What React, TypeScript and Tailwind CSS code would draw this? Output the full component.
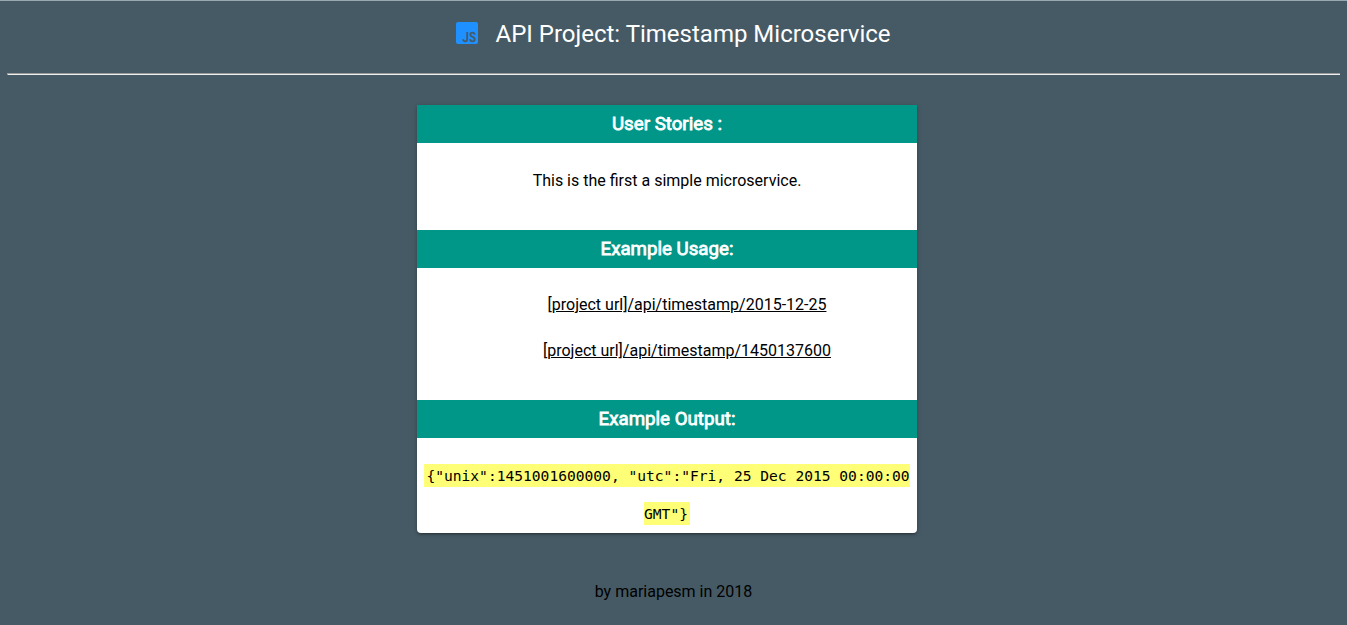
import React from "react";

function SectionTitle({ children }: { children: React.ReactNode }) {
  return (
    <h3 className="h-[38px] bg-[#009688] text-center text-[18.72px] font-normal leading-[38px] text-white [-webkit-text-stroke:0.8px_white]">
      {children}
    </h3>
  );
}

export default function App() {
  return (
    <div className="h-[625px] overflow-hidden border-t border-[#9aa8b0] bg-[#465a65] font-['Roboto',sans-serif] text-base text-black">
      <header className="flex h-[72px] items-start justify-center pt-[15px]">
        <svg className="mt-[6px] mr-[17px] h-[22px] w-[22px]" viewBox="0 0 22 22">
          <rect width="22" height="22" rx="2" fill="#1e90ff" />
          <path
            d="M11.2 10v7.2q0 2.1-2 2.1t-2.1-2M18.6 12.6q-.2-2-2.2-2-2.1 0-2.1 1.9 0 1.7 2.1 2.3 2.3.6 2.3 2.4 0 2.1-2.3 2.1t-2.5-2.1"
            fill="none"
            stroke="#465a65"
            strokeWidth="1.8"
          />
        </svg>
        <h1 className="text-2xl leading-9 text-white">API Project: Timestamp Microservice</h1>
      </header>
      <hr className="mx-[7px] h-[2px] border-0 border-t border-l border-[#9a9a9a] bg-[#eeeeee]" />
      <main className="mt-[30px] ml-[417px] h-[428px] w-[500px] overflow-hidden rounded-b bg-white text-center shadow-[0_2px_2px_0_rgba(0,0,0,0.14),0_3px_1px_-2px_rgba(0,0,0,0.12),0_1px_5px_0_rgba(0,0,0,0.2)]">
        <SectionTitle>User Stories :</SectionTitle>
        <p className="h-[87px] pt-[26px] leading-6">This is the first a simple microservice.</p>
        <SectionTitle>Example Usage:</SectionTitle>
        <ul className="flex h-[132px] flex-col gap-[22px] pt-[25px] pl-10 leading-6 underline">
          <li>[project url]/api/timestamp/2015-12-25</li>
          <li>[project url]/api/timestamp/1450137600</li>
        </ul>
        <SectionTitle>Example Output:</SectionTitle>
        <p className="pt-[19px] leading-[38px]">
          <code className="bg-[#ffff77] px-[2px] py-[3px] font-['DejaVu_Sans_Mono',monospace] text-[14.6px]">
            {'{"unix":1451001600000, "utc":"Fri, 25 Dec 2015 00:00:00 GMT"}'}
          </code>
        </p>
      </main>
      <footer className="mt-[47px] text-center leading-6">by mariapesm in 2018</footer>
    </div>
  );
}
